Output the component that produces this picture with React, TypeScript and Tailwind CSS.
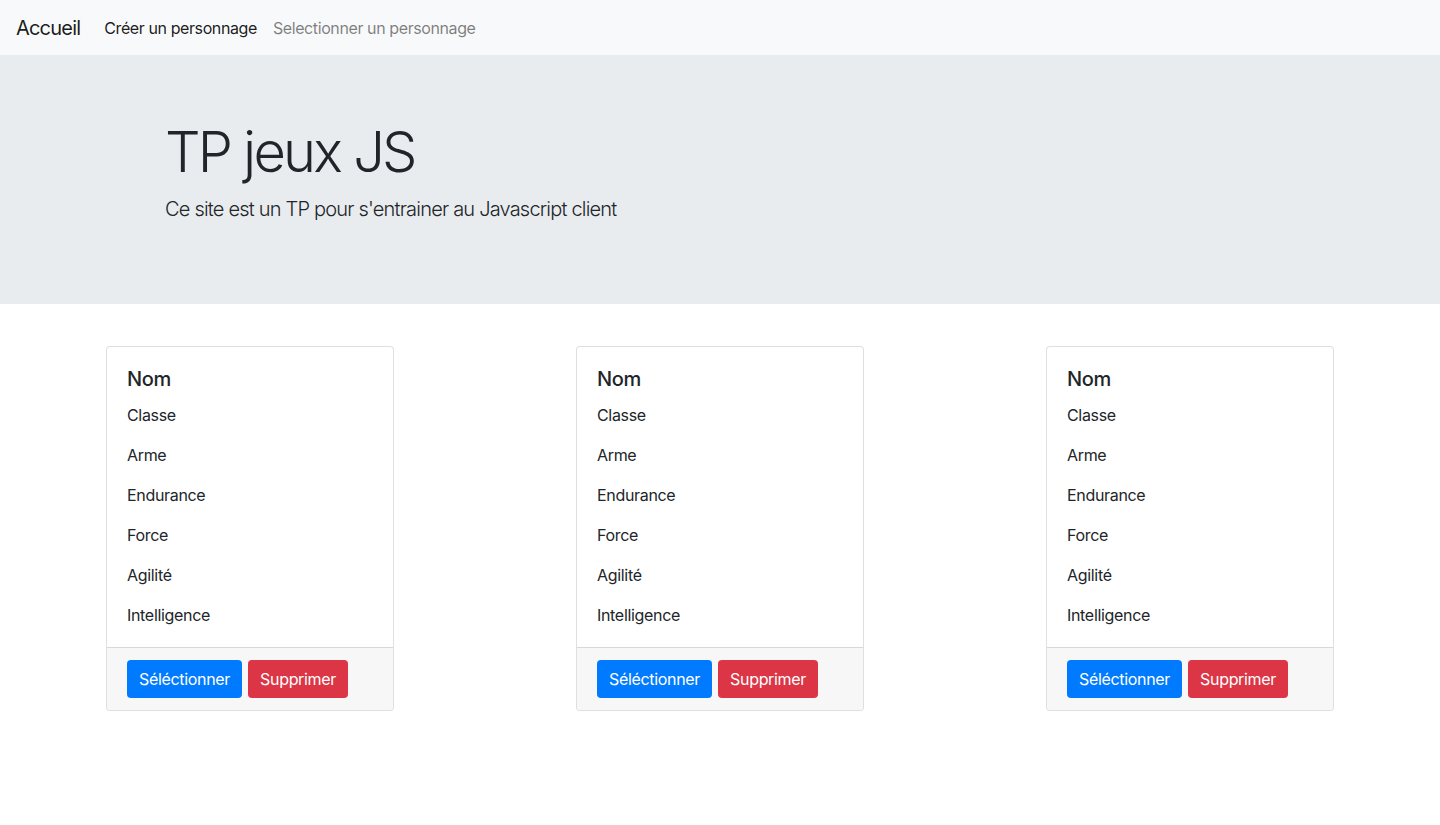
import React from 'react';

const stats = ['Classe', 'Arme', 'Endurance', 'Force', 'Agilité', 'Intelligence'];

const CharacterCard = () => {
  return (
    <div className="w-[288px] mx-auto bg-white border border-[rgba(0,0,0,0.125)] rounded-[4px] overflow-hidden">
      <div className="px-5 pt-5 pb-5">
        <h5 className="text-[20px] leading-[24px] font-medium text-[#212529] mb-3 tracking-[-0.02em]">Nom</h5>
        {stats.map((s, i) => (
          <p
            key={s}
            className={`text-[16px] leading-[24px] text-[#212529] tracking-[-0.02em] ${i === stats.length - 1 ? 'mb-0' : 'mb-4'}`}
          >
            {s}
          </p>
        ))}
      </div>
      <div className="bg-[#f7f7f7] border-t border-[rgba(0,0,0,0.125)] px-5 py-3 flex gap-[6px]">
        <button className="h-[38px] px-3 rounded-[4px] bg-[#007bff] text-white text-[16px] leading-[24px] tracking-[-0.02em]">
          Séléctionner
        </button>
        <button className="h-[38px] px-3 rounded-[4px] bg-[#dc3545] text-white text-[16px] leading-[24px] tracking-[-0.02em]">
          Supprimer
        </button>
      </div>
    </div>
  );
};

export default function App() {
  return (
    <div className="min-h-[825px] bg-white font-['Inter','Liberation_Sans',sans-serif] text-[#212529]">
      <nav className="bg-[#f8f9fa] h-[55px] px-4 flex items-center">
        <a className="text-[20px] leading-[30px] text-[rgba(0,0,0,0.9)] mr-4 tracking-[-0.04em]">Accueil</a>
        <a className="px-2 text-[16px] leading-[24px] text-[rgba(0,0,0,0.9)] tracking-[-0.025em]">Créer un personnage</a>
        <a className="px-2 text-[16px] leading-[24px] text-[rgba(0,0,0,0.5)] tracking-[-0.025em]">Selectionner un personnage</a>
      </nav>

      <div className="bg-[#e9ecef] py-16 mb-[42px]">
        <div className="max-w-[1140px] mx-auto px-[15px]">
          <h1 className="text-[56px] leading-[67px] font-light mb-2 tracking-[-0.05em]">TP jeux JS</h1>
          <p className="text-[20px] leading-[30px] font-light mb-4 tracking-[-0.04em]">
            Ce site est un TP pour s'entrainer au Javascript client
          </p>
        </div>
      </div>

      <div className="px-[15px] grid grid-cols-3">
        {[0, 1, 2].map((i) => (
          <div key={i} className="px-[15px]">
            <CharacterCard />
          </div>
        ))}
      </div>
    </div>
  );
}
